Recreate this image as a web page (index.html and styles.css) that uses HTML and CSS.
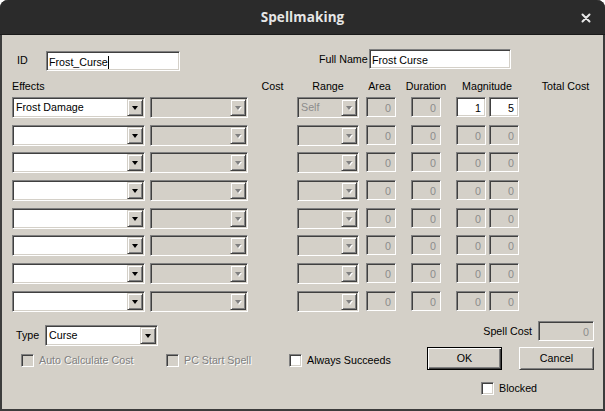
FILE: index.html
```html
<!DOCTYPE html>
<html>
<head>
<meta charset="utf-8">
<title>Spellmaking</title>
<link rel="stylesheet" href="styles.css">
</head>
<body>
<div class="window">
  <div class="titlebar">
    <span class="title">Spellmaking</span>
    <span class="close"><svg width="10" height="10" viewBox="0 0 10 10"><path d="M1.5 1.5 L8.5 8.5 M8.5 1.5 L1.5 8.5" stroke="#e8e8e8" stroke-width="2" stroke-linecap="round"/></svg></span>
  </div>
  <div class="client">
    <div class="names-row">
      <span class="lbl lbl-id">ID</span>
      <div class="field id-field"><span class="txt">Frost_Curse</span><span class="caret"></span></div>
      <span class="lbl lbl-full">Full Name</span>
      <div class="field full-field"><span class="txt">Frost Curse</span></div>
    </div>

    <div class="headers">
      <span class="h h-effects">Effects</span>
      <span class="h h-cost">Cost</span>
      <span class="h h-range">Range</span>
      <span class="h h-area">Area</span>
      <span class="h h-duration">Duration</span>
      <span class="h h-magnitude">Magnitude</span>
      <span class="h h-total">Total Cost</span>
    </div>

    <div class="effects">
      <div class="effect-row">
        <div class="combo c-effect"><span class="ctext">Frost Damage</span><span class="dd"><i class="arrow"></i></span></div>
        <div class="combo c-skill disabled"><span class="ctext"></span><span class="dd"><i class="arrow"></i></span></div>
        <div class="combo c-range disabled"><span class="ctext">Self</span><span class="dd"><i class="arrow"></i></span></div>
        <div class="field num f-area disabled">0</div>
        <div class="field num f-dur disabled">0</div>
        <div class="field num f-mag1">1</div>
        <div class="field num f-mag2">5</div>
      </div>
      <div class="effect-row">
        <div class="combo c-effect"><span class="ctext"></span><span class="dd"><i class="arrow"></i></span></div>
        <div class="combo c-skill disabled"><span class="ctext"></span><span class="dd"><i class="arrow"></i></span></div>
        <div class="combo c-range disabled"><span class="ctext"></span><span class="dd"><i class="arrow"></i></span></div>
        <div class="field num f-area disabled">0</div>
        <div class="field num f-dur disabled">0</div>
        <div class="field num f-mag1 disabled">0</div>
        <div class="field num f-mag2 disabled">0</div>
      </div>
      <div class="effect-row">
        <div class="combo c-effect"><span class="ctext"></span><span class="dd"><i class="arrow"></i></span></div>
        <div class="combo c-skill disabled"><span class="ctext"></span><span class="dd"><i class="arrow"></i></span></div>
        <div class="combo c-range disabled"><span class="ctext"></span><span class="dd"><i class="arrow"></i></span></div>
        <div class="field num f-area disabled">0</div>
        <div class="field num f-dur disabled">0</div>
        <div class="field num f-mag1 disabled">0</div>
        <div class="field num f-mag2 disabled">0</div>
      </div>
      <div class="effect-row">
        <div class="combo c-effect"><span class="ctext"></span><span class="dd"><i class="arrow"></i></span></div>
        <div class="combo c-skill disabled"><span class="ctext"></span><span class="dd"><i class="arrow"></i></span></div>
        <div class="combo c-range disabled"><span class="ctext"></span><span class="dd"><i class="arrow"></i></span></div>
        <div class="field num f-area disabled">0</div>
        <div class="field num f-dur disabled">0</div>
        <div class="field num f-mag1 disabled">0</div>
        <div class="field num f-mag2 disabled">0</div>
      </div>
      <div class="effect-row">
        <div class="combo c-effect"><span class="ctext"></span><span class="dd"><i class="arrow"></i></span></div>
        <div class="combo c-skill disabled"><span class="ctext"></span><span class="dd"><i class="arrow"></i></span></div>
        <div class="combo c-range disabled"><span class="ctext"></span><span class="dd"><i class="arrow"></i></span></div>
        <div class="field num f-area disabled">0</div>
        <div class="field num f-dur disabled">0</div>
        <div class="field num f-mag1 disabled">0</div>
        <div class="field num f-mag2 disabled">0</div>
      </div>
      <div class="effect-row">
        <div class="combo c-effect"><span class="ctext"></span><span class="dd"><i class="arrow"></i></span></div>
        <div class="combo c-skill disabled"><span class="ctext"></span><span class="dd"><i class="arrow"></i></span></div>
        <div class="combo c-range disabled"><span class="ctext"></span><span class="dd"><i class="arrow"></i></span></div>
        <div class="field num f-area disabled">0</div>
        <div class="field num f-dur disabled">0</div>
        <div class="field num f-mag1 disabled">0</div>
        <div class="field num f-mag2 disabled">0</div>
      </div>
      <div class="effect-row">
        <div class="combo c-effect"><span class="ctext"></span><span class="dd"><i class="arrow"></i></span></div>
        <div class="combo c-skill disabled"><span class="ctext"></span><span class="dd"><i class="arrow"></i></span></div>
        <div class="combo c-range disabled"><span class="ctext"></span><span class="dd"><i class="arrow"></i></span></div>
        <div class="field num f-area disabled">0</div>
        <div class="field num f-dur disabled">0</div>
        <div class="field num f-mag1 disabled">0</div>
        <div class="field num f-mag2 disabled">0</div>
      </div>
      <div class="effect-row">
        <div class="combo c-effect"><span class="ctext"></span><span class="dd"><i class="arrow"></i></span></div>
        <div class="combo c-skill disabled"><span class="ctext"></span><span class="dd"><i class="arrow"></i></span></div>
        <div class="combo c-range disabled"><span class="ctext"></span><span class="dd"><i class="arrow"></i></span></div>
        <div class="field num f-area disabled">0</div>
        <div class="field num f-dur disabled">0</div>
        <div class="field num f-mag1 disabled">0</div>
        <div class="field num f-mag2 disabled">0</div>
      </div>
    </div>

    <div class="bottom">
      <div class="bottom-left">
        <div class="type-row">
          <span class="lbl lbl-type">Type</span>
          <div class="combo c-type"><span class="ctext">Curse</span><span class="dd"><i class="arrow"></i></span></div>
        </div>
        <div class="checks-row">
          <label class="check chk-auto disabled"><span class="box"></span><span class="clabel">Auto Calculate Cost</span></label>
          <label class="check chk-pc disabled"><span class="box"></span><span class="clabel">PC Start Spell</span></label>
          <label class="check chk-always"><span class="box"></span><span class="clabel">Always Succeeds</span></label>
        </div>
      </div>
      <div class="bottom-right">
        <div class="cost-row">
          <span class="lbl lbl-spellcost">Spell Cost</span>
          <div class="field num f-spellcost disabled">0</div>
        </div>
        <div class="buttons-row">
          <button class="btn btn-default">OK</button>
          <button class="btn">Cancel</button>
        </div>
        <div class="blocked-row">
          <label class="check chk-blocked"><span class="box"></span><span class="clabel">Blocked</span></label>
        </div>
      </div>
    </div>
  </div>
</div>
</body>
</html>
```

FILE: styles.css
```css
* { box-sizing: border-box; }

html, body {
  margin: 0;
  padding: 0;
  background: #ffffff;
}

body {
  width: 605px;
  height: 411px;
  overflow: hidden;
  font-family: "Liberation Sans", Arial, sans-serif;
  font-size: 10.7px;
  color: #000;
}

.window {
  width: 605px;
  height: 411px;
  background: #d4d0c8;
  border-radius: 8px 8px 0 0;
  overflow: hidden;
  box-shadow: inset 2px 0 #3c3c3c, inset -2px 0 #3c3c3c, inset 0 -2px #3c3c3c;
  display: flex;
  flex-direction: column;
}

/* ---------- title bar ---------- */
.titlebar {
  height: 35px;
  flex: 0 0 35px;
  background: #2b2b2b;
  border-bottom: 1px solid #1a1a1a;
  display: flex;
  align-items: center;
  justify-content: center;
  position: relative;
}

.title {
  font-family: "Open Sans", "Noto Sans", sans-serif;
  font-weight: 700;
  font-size: 13.5px;
  color: #e6e6e6;
  letter-spacing: 0.1px;
}

.close {
  position: absolute;
  right: 14px;
  top: 13px;
  width: 10px;
  height: 10px;
  display: flex;
}

/* ---------- client area ---------- */
.client {
  flex: 1;
  display: flex;
  flex-direction: column;
}

.lbl {
  white-space: nowrap;
  line-height: 21px;
}

/* sunken 3D field */
.field, .combo, .box {
  border: 1px solid;
  border-color: #808080 #ffffff #ffffff #808080;
  box-shadow: inset 1px 1px 0 #404040, inset -1px -1px 0 #d4d0c8;
  background: #ffffff;
}

.field {
  height: 20px;
  padding: 2px 3px 0 2px;
  line-height: 14px;
  white-space: nowrap;
  overflow: hidden;
  display: flex;
  align-items: center;
}

.field .txt { display: block; }

.field.disabled, .combo.disabled, .check.disabled .box {
  background: #d4d0c8;
}

.field.disabled { color: #8c8c8c; }

.num {
  justify-content: flex-end;
  padding-right: 4px;
}

/* names row */
.names-row {
  display: flex;
  align-items: flex-start;
  margin-top: 14px;
  height: 21px;
}

.lbl-id {
  margin-left: 17px;
  width: 29px;
  margin-top: 1px;
}

.id-field {
  width: 134px;
  margin-top: 2px;
}

.caret {
  display: block;
  width: 1px;
  height: 13px;
  background: #000;
}

.lbl-full {
  margin-left: 139px;
  width: 50px;
}

.full-field {
  width: 142px;
}

/* header labels */
.headers {
  display: flex;
  margin-top: 9px;
  height: 14px;
  line-height: 14px;
  white-space: nowrap;
}

.h { display: block; text-align: center; flex: 0 0 auto; }
.h-effects { margin-left: 12px; width: 236px; text-align: left; }
.h-cost { width: 49px; }
.h-range { width: 62px; }
.h-area { width: 41px; }
.h-duration { width: 52px; }
.h-magnitude { width: 70px; }
.h-total { width: 80px; padding-left: 7px; }

/* effect rows */
.effects {
  display: flex;
  flex-direction: column;
  gap: 6.7px;
  margin-top: 4px;
}

.effect-row {
  display: flex;
  height: 21px;
  align-items: flex-start;
}

.combo {
  height: 21px;
  display: flex;
  align-items: stretch;
  padding: 1px;
  flex: 0 0 auto;
}

.ctext {
  flex: 1;
  padding-left: 2px;
  line-height: 17px;
  white-space: nowrap;
  overflow: hidden;
}

.combo.disabled .ctext { color: #8c8c8c; }

.dd {
  width: 16px;
  flex: 0 0 16px;
  background: #d4d0c8;
  border: 1px solid;
  border-color: #d4d0c8 #404040 #404040 #d4d0c8;
  box-shadow: inset 1px 1px 0 #ffffff, inset -1px -1px 0 #808080;
  display: flex;
  align-items: center;
  justify-content: center;
}

.arrow {
  display: block;
  width: 0;
  height: 0;
  border-left: 3.5px solid transparent;
  border-right: 3.5px solid transparent;
  border-top: 4px solid #000;
  margin-top: 1px;
}

.combo.disabled .arrow {
  border-top-color: #808080;
  filter: drop-shadow(1px 1px 0 #ffffff);
}

.c-effect { margin-left: 12px; width: 133px; }
.c-skill { margin-left: 5px; width: 98px; }
.c-range { margin-left: 49px; width: 62px; }

.effect-row .field { width: 30px; flex: 0 0 30px; }
.f-area { margin-left: 7px; }
.f-dur { margin-left: 15px; }
.f-mag1 { margin-left: 15px; }
.f-mag2 { margin-left: 3px; }

/* bottom */
.bottom {
  display: flex;
}

.bottom-left {
  flex: 0 0 427px;
  display: flex;
  flex-direction: column;
}

.type-row {
  display: flex;
  margin-top: 13px;
  height: 21px;
}

.lbl-type {
  margin-left: 16px;
  width: 29px;
}

.c-type { width: 113px; }

.checks-row {
  display: flex;
  margin-top: 8px;
  padding-left: 21px;
}

.check {
  display: flex;
  align-items: center;
  height: 13px;
  white-space: nowrap;
}

.box {
  width: 13px;
  height: 13px;
  flex: 0 0 13px;
  display: block;
}

.clabel {
  margin-left: 5px;
  line-height: 13px;
}

.check.disabled .clabel {
  color: #808080;
  text-shadow: 1px 1px 0 #ffffff;
}

.chk-auto { width: 145px; }
.chk-pc { width: 123px; }

.bottom-right {
  flex: 0 0 167px;
  display: flex;
  flex-direction: column;
}

.cost-row {
  display: flex;
  justify-content: flex-end;
  margin-top: 9px;
  height: 20px;
}

.lbl-spellcost {
  line-height: 20px;
  margin-right: 6px;
}

.f-spellcost { width: 56px; }

.buttons-row {
  display: flex;
  justify-content: space-between;
  margin-top: 6px;
}

.btn {
  width: 75px;
  height: 23px;
  padding: 0;
  font: inherit;
  color: #000;
  background: #d4d0c8;
  border: 1px solid;
  border-color: #ffffff #404040 #404040 #ffffff;
  box-shadow: inset 1px 1px 0 #d4d0c8, inset -1px -1px 0 #808080;
  border-radius: 0;
}

.btn-default {
  border-color: #000;
  box-shadow: inset 1px 1px 0 #ffffff, inset -1px -1px 0 #404040, inset -2px -2px 0 #808080;
}

.blocked-row {
  display: flex;
  margin-top: 12px;
  padding-left: 54px;
}
```
